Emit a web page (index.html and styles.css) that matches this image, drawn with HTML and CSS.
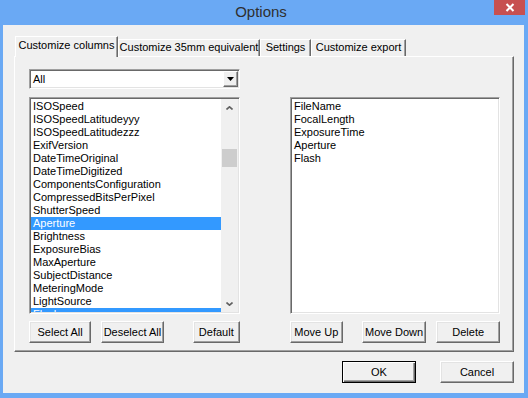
FILE: index.html
```html
<!DOCTYPE html>
<html lang="en">
<head>
  <meta charset="UTF-8" />
  <title>Options</title>
  <link rel="stylesheet" href="styles.css">
</head>
<body>
  <div class="window">
    <div class="titlebar">
      <span></span>
      <span class="title">Options</span>
      <span class="close">
        <svg width="10" height="9" viewBox="0 0 10 9"><path d="M1.5 1 L8.5 8 M8.5 1 L1.5 8" stroke="#fff" stroke-width="2"/></svg>
      </span>
    </div>

    <div class="client">
      <div class="tabs">
        <div class="tab active w1">Customize columns</div>
        <div class="tab w2">Customize 35mm equivalent</div>
        <div class="tab w3">Settings</div>
        <div class="tab w4">Customize export</div>
      </div>

      <div class="panel">
        <div class="combo">
          <span class="combo-text">All</span>
          <span class="combo-btn">
            <svg width="7" height="4" viewBox="0 0 7 4"><path d="M0 0 H7 L3.5 4 Z" fill="#000"/></svg>
          </span>
        </div>
        <div></div>

        <div class="list">
          <div class="items">
            <div class="item">ISOSpeed</div>
            <div class="item">ISOSpeedLatitudeyyy</div>
            <div class="item">ISOSpeedLatitudezzz</div>
            <div class="item">ExifVersion</div>
            <div class="item">DateTimeOriginal</div>
            <div class="item">DateTimeDigitized</div>
            <div class="item">ComponentsConfiguration</div>
            <div class="item">CompressedBitsPerPixel</div>
            <div class="item">ShutterSpeed</div>
            <div class="item selected">Aperture</div>
            <div class="item">Brightness</div>
            <div class="item">ExposureBias</div>
            <div class="item">MaxAperture</div>
            <div class="item">SubjectDistance</div>
            <div class="item">MeteringMode</div>
            <div class="item">LightSource</div>
            <div class="item selected">Flash</div>
          </div>
          <div class="scrollbar">
            <div class="arrow">
              <svg width="7" height="4" viewBox="0 0 7 4"><path d="M0.5 3.5 L3.5 0.8 L6.5 3.5" fill="none" stroke="#606060" stroke-width="1.6"/></svg>
            </div>
            <div class="track"><div class="thumb"></div></div>
            <div class="arrow">
              <svg width="7" height="4" viewBox="0 0 7 4"><path d="M0.5 0.5 L3.5 3.2 L6.5 0.5" fill="none" stroke="#606060" stroke-width="1.6"/></svg>
            </div>
          </div>
        </div>

        <div class="list">
          <div class="items">
            <div class="item">FileName</div>
            <div class="item">FocalLength</div>
            <div class="item">ExposureTime</div>
            <div class="item">Aperture</div>
            <div class="item">Flash</div>
          </div>
        </div>

        <div class="btn-row">
          <button class="btn b-select">Select All</button>
          <button class="btn b-deselect">Deselect All</button>
          <button class="btn b-default">Default</button>
        </div>

        <div class="btn-row">
          <button class="btn b-up">Move Up</button>
          <button class="btn b-down">Move Down</button>
          <button class="btn b-delete">Delete</button>
        </div>
      </div>

      <div class="footer">
        <button class="btn dialog default-btn">OK</button>
        <button class="btn dialog">Cancel</button>
      </div>
    </div>
  </div>
</body>
</html>
```

FILE: styles.css
```css
* { box-sizing: border-box; }

body {
  margin: 0;
  width: 528px;
  height: 398px;
  overflow: hidden;
  background: #6aa9f4;
  font-family: 'Liberation Sans', Arial, sans-serif;
  font-size: 11px;
  color: #000;
}

.window {
  width: 528px;
  height: 398px;
}

.titlebar {
  height: 25px;
  display: grid;
  grid-template-columns: 1fr auto 1fr;
  align-items: start;
}

.title {
  font-size: 15px;
  color: #2f2f2f;
  padding-top: 3px;
  margin-left: -6px;
}

.close {
  justify-self: end;
  width: 31px;
  height: 15px;
  margin-right: 3px;
  background: #c75050;
  display: flex;
  align-items: center;
  justify-content: center;
}

.client {
  margin: 0 4px 5px 3px;
  height: 368px;
  background: #f0f0f0;
  padding: 11px 0 0 11px;
}

/* tabs */
.tabs {
  display: flex;
  align-items: flex-end;
  height: 20px;
  padding-left: 1px;
  position: relative;
  z-index: 1;
}

.tab {
  height: 17px;
  border-top: 1px solid #fff;
  border-left: 1px solid #fff;
  border-right: 1px solid #696969;
  box-shadow: inset -1px 0 #a0a0a0;
  text-align: center;
  line-height: 15px;
  white-space: nowrap;
}

.tab.active {
  height: 21px;
  margin-bottom: -1px;
  background: #f0f0f0;
  line-height: 17px;
}

.w1 { width: 103px; }
.w2 { width: 142px; }
.w3 { width: 51px; }
.w4 { width: 95px; }

.panel {
  width: 500px;
  height: 296px;
  border-top: 1px solid #fff;
  border-left: 1px solid #fff;
  border-right: 1px solid #696969;
  border-bottom: 1px solid #696969;
  box-shadow: inset -1px -1px #a0a0a0;
  padding: 12px 0 0 14px;
  display: grid;
  grid-template-columns: 211px 210px;
  grid-template-rows: 20px 217px 22px;
  column-gap: 50px;
  row-gap: 8px;
}

.panel .btn-row { margin-top: -1px; }

/* sunken boxes */
.combo, .list {
  background: #fff;
  border: 1px solid;
  border-color: #a0a0a0 #fff #fff #a0a0a0;
  box-shadow: inset 1px 1px #696969, inset -1px -1px #e3e3e3;
  padding: 1px;
}

.combo {
  display: flex;
  align-items: stretch;
}

.combo-text {
  flex: 1;
  padding: 2px 0 0 2px;
}

.combo-btn {
  width: 15px;
  background: #f0f0f0;
  border: 1px solid;
  border-color: #fff #696969 #696969 #fff;
  box-shadow: inset -1px -1px #a0a0a0;
  display: flex;
  align-items: center;
  justify-content: center;
}

.list {
  display: flex;
  overflow: hidden;
}

.items {
  flex: 1;
  padding-top: 1px;
  overflow: hidden;
}

.item {
  height: 13px;
  line-height: 13px;
  padding-left: 2px;
  white-space: nowrap;
}

.item.selected {
  background: #3399ff;
  color: #fff;
}

.scrollbar {
  width: 17px;
  background: #f0f0f0;
  display: flex;
  flex-direction: column;
}

.arrow {
  height: 17px;
  display: flex;
  align-items: center;
  justify-content: center;
}

.track {
  flex: 1;
  padding: 33px 1px 0 1px;
}

.thumb {
  height: 18px;
  background: #cdcdcd;
}

/* buttons */
.btn-row {
  display: flex;
  align-items: flex-start;
}

.btn {
  height: 22px;
  padding: 0;
  font-family: 'Liberation Sans', Arial, sans-serif;
  font-size: 11px;
  color: #000;
  background: #f0f0f0;
  border: 1px solid;
  border-color: #fff #696969 #696969 #fff;
  box-shadow: inset -1px -1px #a0a0a0, inset 1px 1px #e3e3e3;
}

.b-select { width: 63px; }
.b-deselect { width: 63px; margin-left: 10px; }
.b-default { width: 48px; margin-left: 29px; }
.b-up { width: 53px; }
.b-down { width: 65px; margin-left: 19px; }
.b-delete { width: 64px; margin-left: 10px; }

.footer {
  display: flex;
  justify-content: flex-end;
  gap: 24px;
  padding: 9px 10px 0 0;
}

.btn.dialog {
  width: 74px;
  height: 22px;
}

.btn.default-btn {
  border: 1px solid #000;
  box-shadow: inset 1px 1px #fff, inset -1px -1px #696969, inset -2px -2px #a0a0a0;
}
```
